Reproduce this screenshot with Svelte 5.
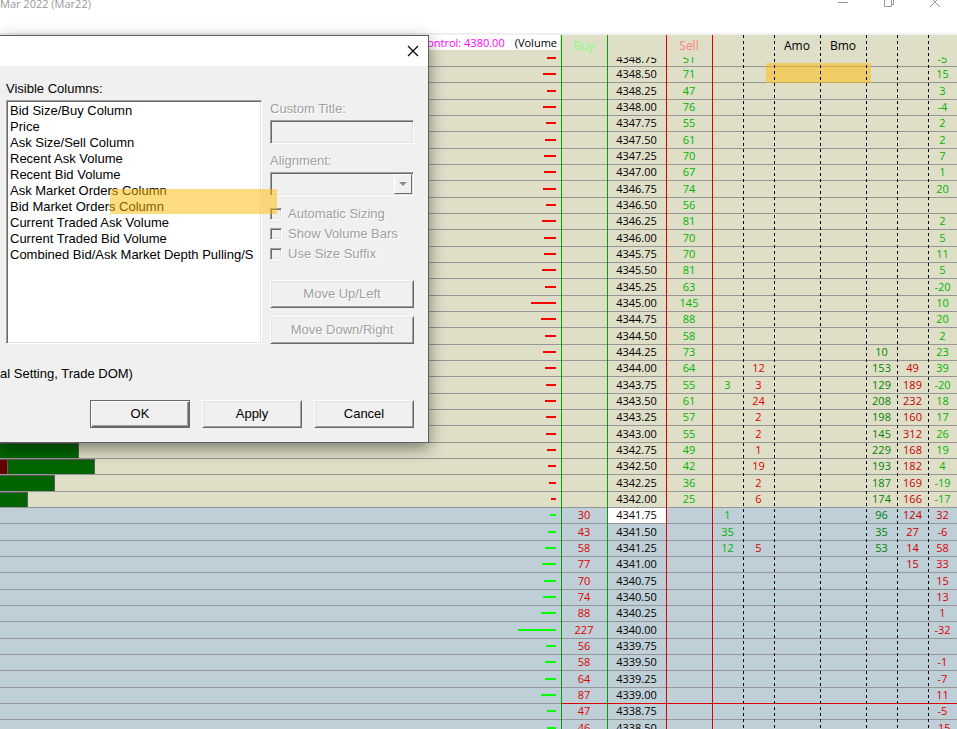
<script lang="ts">
	type Row = {
		price: string
		size: number
		bid?: boolean
		recentAsk?: number
		recentBid?: number
		askTraded?: number
		bidTraded?: number
		pulling?: number
	}

	const sizes = [
		51, 71, 47, 76, 55, 61, 70, 67, 74, 56, 81, 70, 70, 81, 63, 145, 88, 58, 73, 64, 55, 61, 57,
		55, 49, 42, 36, 25, 30, 43, 58, 77, 70, 74, 88, 227, 56, 58, 64, 87, 47, 46,
	]
	const pulling = [
		-5, 15, 3, -4, 2, 2, 7, 1, 20, null, 2, 5, 11, 5, -20, 10, 20, 2, 23, 39, -20, 18, 17, 26, 19,
		4, -19, -17, 32, -6, 58, 33, 15, 13, 1, -32, null, -1, -7, 11, -5, -15,
	]
	const recentAsk: Record<number, number> = { 20: 3, 28: 1, 29: 35, 30: 12 }
	const recentBid: Record<number, number> = {
		19: 12, 20: 3, 21: 24, 22: 2, 23: 2, 24: 1, 25: 19, 26: 2, 27: 6, 30: 5,
	}
	const askTraded: Record<number, number> = {
		18: 10, 19: 153, 20: 129, 21: 208, 22: 198, 23: 145, 24: 229, 25: 193, 26: 187, 27: 174,
		28: 96, 29: 35, 30: 53,
	}
	const bidTraded: Record<number, number> = {
		19: 49, 20: 189, 21: 232, 22: 160, 23: 312, 24: 168, 25: 182, 26: 169, 27: 166, 28: 124,
		29: 27, 30: 14, 31: 15,
	}

	// volume profile bars, widths in px from the left edge
	const profile: Record<number, { down: number; up: number }> = {
		24: { down: 0, up: 79 },
		25: { down: 8, up: 87 },
		26: { down: 0, up: 55 },
		27: { down: 0, up: 28 },
	}

	const FIRST_BID = 28
	const SETTLE = 39

	const rows: Row[] = sizes.map((size, i) => ({
		price: (4348.75 - i * 0.25).toFixed(2),
		size,
		bid: i >= FIRST_BID,
		recentAsk: recentAsk[i],
		recentBid: recentBid[i],
		askTraded: askTraded[i],
		bidTraded: bidTraded[i],
		pulling: pulling[i] ?? undefined,
	}))

	const visibleColumns = [
		'Bid Size/Buy Column',
		'Price',
		'Ask Size/Sell Column',
		'Recent Ask Volume',
		'Recent Bid Volume',
		'Ask Market Orders Column',
		'Bid Market Orders Column',
		'Current Traded Ask Volume',
		'Current Traded Bid Volume',
		'Combined Bid/Ask Market Depth Pulling/S',
	]
	const options = ['Automatic Sizing', 'Show Volume Bars', 'Use Size Suffix']

	let open = $state(true)

	function depthWidth(size: number) {
		return Math.round(size / 6.1 + 1)
	}
</script>

<div class="window">
	<header class="titlebar">
		<span class="title">Mar 2022 (Mar22)</span>
		<div class="controls">
			<button aria-label="Minimize">
				<svg width="12" height="12" viewBox="0 0 12 12"><path d="M1 6.5h10" /></svg>
			</button>
			<button aria-label="Restore">
				<svg width="12" height="12" viewBox="0 0 12 12">
					<path d="M1.5 2.5h7v8h-7zM3.5 2.5v-2h7v8h-2" />
				</svg>
			</button>
			<button aria-label="Close">
				<svg width="12" height="12" viewBox="0 0 12 12"><path d="M1 1l10 10M11 1L1 11" /></svg>
			</button>
		</div>
	</header>

	<main class="ladder">
		<table>
			<colgroup>
				<col />
				<col class="w-size" />
				<col class="w-price" />
				<col class="w-size" />
				<col class="w-trade" />
				<col class="w-trade" />
				<col class="w-size" />
				<col class="w-size" />
				<col class="w-trade" />
				<col class="w-trade" />
				<col class="w-last" />
			</colgroup>
			<thead>
				<tr>
					<th class="chart-head">
						<div class="study"><span class="poc">Control: 4380.00</span><span>(Volume</span></div>
					</th>
					<th class="buy">Buy</th>
					<th></th>
					<th class="sell">Sell</th>
					<th></th>
					<th></th>
					<th>Amo</th>
					<th>Bmo</th>
					<th></th>
					<th></th>
					<th></th>
				</tr>
			</thead>
			<tbody>
				{#each rows as row, i}
					<tr
						class:bid={row.bid}
						class:clipped={i === 0}
						class:tall={i % 3 === 2}
						class:settle={i === SETTLE}
					>
						<td class="chart">
							<div class="bars">
								{#if profile[i]}
									{#if profile[i].down}
										<span class="vol down" style="width: {profile[i].down}px"></span>
									{/if}
									<span class="vol up" style="width: {profile[i].up}px"></span>
								{/if}
								<span class="depth" style="width: {depthWidth(row.size)}px"></span>
							</div>
						</td>
						<td class="red">{row.bid ? row.size : ''}</td>
						<td class="price" class:last={i === FIRST_BID}><div>{row.price}</div></td>
						<td class="green"><div>{row.bid ? '' : row.size}</div></td>
						<td class="green">{row.recentAsk ?? ''}</td>
						<td class="red">{row.recentBid ?? ''}</td>
						<td></td>
						<td></td>
						<td class="dark-green">{row.askTraded ?? ''}</td>
						<td class="dark-red">{row.bidTraded ?? ''}</td>
						<td class={row.bid ? 'red' : 'green'}><div>{row.pulling ?? ''}</div></td>
					</tr>
				{/each}
			</tbody>
		</table>
		<div class="marker marker-cells"></div>
	</main>

	{#if open}
		<div class="dialog" role="dialog" aria-label="Columns">
			<div class="dialog-title">
				<button aria-label="Close dialog" onclick={() => (open = false)}>
					<svg width="12" height="12" viewBox="0 0 12 12"><path d="M1 1l10 10M11 1L1 11" /></svg>
				</button>
			</div>
			<div class="dialog-body">
				<label class="field-label" for="visible-columns">Visible Columns:</label>
				<div class="fields">
					<select id="visible-columns" class="sunken listbox" multiple size="10">
						{#each visibleColumns as column}
							<option>{column}</option>
						{/each}
					</select>
					<div class="settings">
						<label class="field-label disabled" for="custom-title">Custom Title:</label>
						<input id="custom-title" class="sunken" type="text" disabled />
						<label class="field-label disabled" for="alignment">Alignment:</label>
						<div class="combo sunken">
							<select id="alignment" disabled><option></option></select>
							<span class="arrow" aria-hidden="true">
								<svg width="8" height="4" viewBox="0 0 8 4"><path d="M0 0h8L4 4z" /></svg>
							</span>
						</div>
						<div class="checks">
							{#each options as option}
								<label class="disabled"><input class="sunken" type="checkbox" disabled />{option}</label>
							{/each}
						</div>
						<button class="push disabled" disabled>Move Up/Left</button>
						<button class="push disabled" disabled>Move Down/Right</button>
					</div>
				</div>
				<p class="caption">al Setting, Trade DOM)</p>
				<div class="actions">
					<button class="push default" onclick={() => (open = false)}>OK</button>
					<button class="push">Apply</button>
					<button class="push" onclick={() => (open = false)}>Cancel</button>
				</div>
			</div>
			<div class="marker marker-list"></div>
		</div>
	{/if}
</div>

<style>
	:global(body) {
		margin: 0;
		overflow: hidden;
	}

	.window {
		--ask-bg: #dfdfc8;
		--bid-bg: #bfcfd7;
		--green: #00b400;
		--red: #dc0000;
		position: relative;
		display: flex;
		flex-direction: column;
		height: 100vh;
		overflow: hidden;
		background: #fff;
		font-family: 'Open Sans', 'Noto Sans', sans-serif;
		font-size: 11px;
		color: #000;
	}

	button {
		padding: 0;
		border: 0;
		background: none;
		font: inherit;
		color: inherit;
	}

	/* Title bar */
	.titlebar {
		display: flex;
		justify-content: space-between;
		box-sizing: border-box;
		height: 35px;
		flex-shrink: 0;
		border-bottom: 2px solid #f0f0f0;
		color: #999;
		line-height: 8px;
	}

	.controls {
		display: flex;
		align-items: flex-start;
		gap: 34px;
		padding-right: 16px;
		margin-top: -4px;
	}

	.controls button {
		display: flex;
	}

	svg {
		display: block;
	}

	.controls path {
		fill: none;
		stroke: #999;
	}

	/* Ladder */
	.ladder {
		position: relative;
		flex: 1;
		min-height: 0;
		overflow: hidden;
		background: var(--bid-bg);
	}

	/* column rules run unbroken over the rows */
	.ladder::after {
		content: '';
		position: absolute;
		inset: 0;
		pointer-events: none;
		--dash: repeating-linear-gradient(#000 0 3px, transparent 3px 6px);
		--buy: linear-gradient(#00a000, #00a000);
		--sell: linear-gradient(#dc0000, #dc0000);
		background:
			var(--buy) right 395px top / 1px 100%,
			var(--buy) right 349px top / 1px 100%,
			var(--sell) right 290px top / 1px 100%,
			var(--sell) right 244px top / 1px 100%,
			var(--dash) right 213px top / 1px 100%,
			var(--dash) right 182px top / 1px 100%,
			var(--dash) right 136px top / 1px 100%,
			var(--dash) right 90px top / 1px 100%,
			var(--dash) right 59px top / 1px 100%,
			var(--dash) right 28px top / 1px 100%;
		background-repeat: no-repeat;
	}

	table {
		width: 100%;
		table-layout: fixed;
		border-collapse: separate;
		border-spacing: 0;
		text-align: center;
	}

	.w-size {
		width: 46px;
	}

	.w-price {
		width: 59px;
	}

	.w-trade {
		width: 31px;
	}

	.w-last {
		width: 29px;
	}

	th,
	td {
		padding: 0;
	}

	th {
		height: 22px;
		background: var(--ask-bg);
		font-size: 12px;
		font-weight: normal;
		line-height: 22px;
	}

	.chart-head {
		vertical-align: top;
	}

	.study {
		display: flex;
		justify-content: flex-end;
		gap: 10px;
		height: 15px;
		margin-right: 1px;
		padding-right: 3px;
		background: #fff;
		font-size: 11px;
		line-height: 15px;
		white-space: nowrap;
	}

	.poc {
		color: #f0f;
	}

	.buy {
		color: #80ff80;
	}

	.sell {
		color: #ff8080;
	}

	tr {
		background: var(--ask-bg);
	}

	tr.bid {
		background: var(--bid-bg);
	}

	td {
		height: 15px;
		border-bottom: 1px solid #969696;
		line-height: 13px;
		vertical-align: top;
	}

	.tall td {
		height: 16px;
		line-height: 15px;
	}

	.clipped td {
		height: 9px;
	}

	.clipped td div {
		display: flex;
		align-items: flex-end;
		justify-content: center;
		height: 8px;
		overflow: hidden;
	}

	.settle td:not(.chart) {
		border-bottom-color: var(--red);
	}

	.chart {
		padding-right: 5px;
	}

	.bars {
		display: flex;
		height: 15px;
	}

	.tall .bars {
		height: 16px;
	}

	.depth {
		height: 2px;
		margin-top: 6px;
		margin-left: auto;
		background: #f00;
	}

	.tall .depth {
		margin-top: 7px;
	}

	.clipped td .bars {
		align-items: flex-start;
	}

	.clipped .depth {
		margin-top: 0;
	}

	.bid .depth {
		background: #0f0;
	}

	.vol {
		box-sizing: border-box;
		height: 100%;
		border: solid #5a5a5a;
		border-width: 1px 1px 0 0;
	}

	.up {
		background: #006400;
	}

	.down {
		background: #640000;
	}

	.price.last {
		background: #fff;
	}

	.green {
		color: var(--green);
	}

	.red {
		color: var(--red);
	}

	.dark-green {
		color: #008200;
	}

	.dark-red {
		color: #c80000;
	}

	.marker {
		position: absolute;
		background: rgba(255, 186, 0, 0.5);
		pointer-events: none;
	}

	.marker-cells {
		top: 28px;
		right: 86px;
		width: 105px;
		height: 20px;
	}

	.marker-list {
		top: 153px;
		left: 110px;
		width: 167px;
		height: 25px;
	}

	/* Dialog */
	.dialog {
		position: absolute;
		top: 35px;
		left: 0;
		width: 428px;
		border: solid #5f5f5f;
		border-width: 1px 1px 1px 0;
		background: #f0f0f0;
		box-shadow: 0 5px 15px rgba(0, 0, 0, 0.45);
		font-family: 'Liberation Sans', Arial, sans-serif;
		font-size: 13px;
		line-height: 16px;
	}

	.dialog-title {
		display: flex;
		align-items: center;
		justify-content: flex-end;
		height: 30px;
		padding-right: 9px;
		background: #fff;
	}

	.dialog-title path {
		fill: none;
		stroke: #000;
		stroke-width: 1.2;
	}

	.dialog-body {
		padding: 14px 14px 14px 6px;
	}

	.field-label {
		display: block;
		margin-bottom: 2px;
		line-height: 18px;
	}

	.fields {
		display: grid;
		grid-template-columns: 256px minmax(0, 1fr);
		gap: 8px;
	}

	.sunken {
		box-sizing: border-box;
		margin: 0;
		border: 1px solid;
		border-color: #a0a0a0 #fff #fff #a0a0a0;
		border-radius: 0;
		background: #f0f0f0;
		box-shadow:
			inset 1px 1px #696969,
			inset -1px -1px #e3e3e3;
	}

	.listbox {
		width: 100%;
		height: 244px;
		padding: 2px 1px 1px;
		background: #fff;
		color: #000;
		font: inherit;
		overflow: hidden;
		outline: none;
	}

	.listbox option {
		min-height: 16px;
		padding: 0 2px;
		line-height: 16px;
	}

	.settings {
		display: flex;
		flex-direction: column;
	}

	.disabled {
		color: #a0a0a0;
		text-shadow: 1px 1px #fff;
	}

	.settings input[type='text'],
	.combo {
		width: 100%;
		height: 24px;
		margin-bottom: 8px;
	}

	.combo {
		display: flex;
		padding: 1px;
	}

	.combo select {
		flex: 1;
		min-width: 0;
		appearance: none;
		border: 0;
		background: transparent;
	}

	.arrow {
		display: flex;
		align-items: center;
		justify-content: center;
		width: 16px;
		border: 1px solid;
		border-color: #fff #696969 #696969 #fff;
	}

	.arrow path {
		fill: #8c8c8c;
	}

	.checks {
		margin-bottom: 16px;
	}

	.checks label {
		display: flex;
		align-items: center;
		gap: 6px;
		height: 20px;
	}

	.checks input {
		appearance: none;
		width: 12px;
		height: 12px;
	}

	.push {
		box-sizing: border-box;
		height: 28px;
		border: 1px solid;
		border-color: #fff #696969 #696969 #fff;
		background: #f0f0f0;
		box-shadow:
			inset 1px 1px #e3e3e3,
			inset -1px -1px #a0a0a0;
	}

	.settings .push + .push {
		margin-top: 8px;
	}

	.push.default {
		border-color: #696969;
		box-shadow:
			inset 1px 1px #fff,
			inset -1px -1px #696969,
			inset -2px -2px #a0a0a0;
	}

	.caption {
		margin: 22px 0 18px -6px;
	}

	.actions {
		display: flex;
		justify-content: flex-end;
		gap: 12px;
	}

	.actions .push {
		width: 100px;
	}
</style>
